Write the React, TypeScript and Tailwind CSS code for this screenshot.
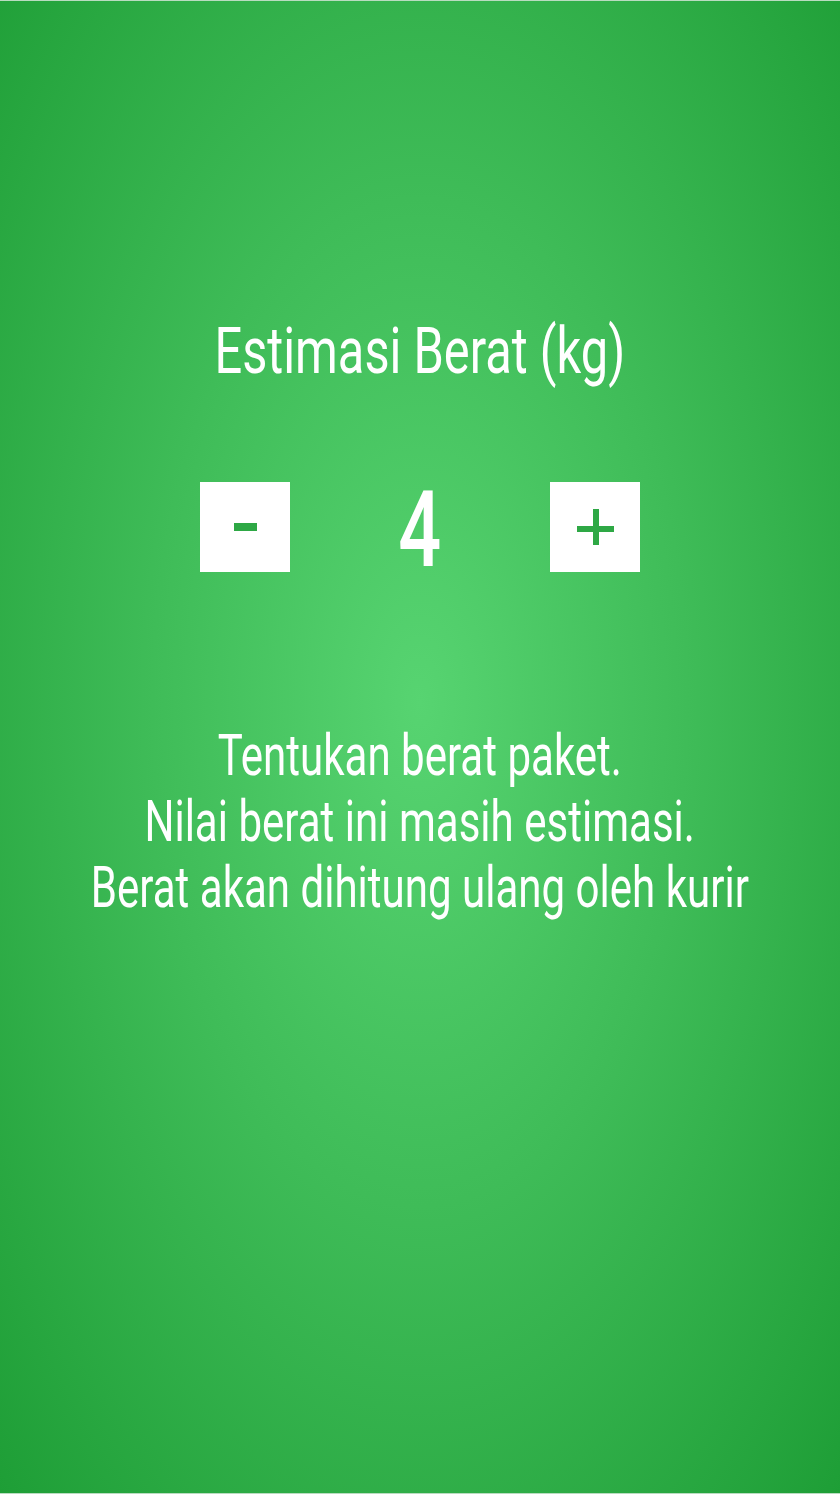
import React, { useState } from "react";

export default function App() {
  const [weight, setWeight] = useState(4);
  return (
    <div
      className="relative flex h-[1494px] w-full flex-col items-center overflow-hidden border-y border-[#b9dcc0] bg-[radial-gradient(ellipse_at_50%_47%,#57d471_0%,#3fbc58_45%,#1e9e36_100%)] text-white"
      style={{ fontFamily: "Roboto, 'Liberation Sans', sans-serif" }}
    >
      <div className="mt-[318px] h-[65px] whitespace-nowrap text-center text-[65px] font-normal leading-[65px]">
        <span className="inline-block origin-center scale-x-[0.75]">Estimasi Berat (kg)</span>
      </div>

      <div className="mt-[98px] flex w-[440px] items-center justify-between">
        <button
          onClick={() => setWeight(Math.max(0, weight - 1))}
          className="flex h-[90px] w-[90px] items-center justify-center bg-white"
        >
          <span className="block h-[8px] w-[23px] bg-[#2ea845]" />
        </button>
        <div className="h-[90px] whitespace-nowrap text-center text-[105px] font-medium leading-[90px]">
          <span className="inline-block origin-center translate-y-[4px] scale-x-[0.72]">{weight}</span>
        </div>
        <button
          onClick={() => setWeight(weight + 1)}
          className="relative flex h-[90px] w-[90px] items-center justify-center bg-white"
        >
          <span className="absolute left-[27px] top-[44px] h-[6px] w-[37px] bg-[#2ea845]" />
          <span className="absolute left-[43px] top-[27px] h-[36px] w-[6px] bg-[#2ea845]" />
        </button>
      </div>

      <div className="mt-[150px] flex flex-col items-center whitespace-nowrap text-center text-[58px] font-normal leading-[66px]">
        <span className="inline-block origin-center scale-x-[0.725]">Tentukan berat paket.</span>
        <span className="inline-block origin-center scale-x-[0.725]">Nilai berat ini masih estimasi.</span>
        <span className="inline-block origin-center scale-x-[0.725]">Berat akan dihitung ulang oleh kurir</span>
      </div>
    </div>
  );
}
